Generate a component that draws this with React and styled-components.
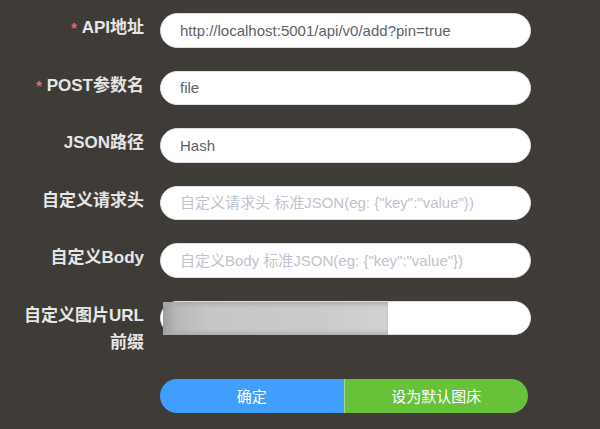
import React from "react";
import styled, { createGlobalStyle } from "styled-components";

const GlobalStyle = createGlobalStyle`
  html, body {
    margin: 0;
    padding: 0;
    background: #3f3b36;
  }
  body {
    font-family: "Liberation Sans", "Noto Sans CJK SC", sans-serif;
  }
`;

const fields = [
  { label: "API地址", required: true, value: "http://localhost:5001/api/v0/add?pin=true" },
  { label: "POST参数名", required: true, value: "file" },
  { label: "JSON路径", value: "Hash" },
  { label: "自定义请求头", placeholder: '自定义请求头 标准JSON(eg: {"key":"value"})' },
  { label: "自定义Body", placeholder: '自定义Body 标准JSON(eg: {"key":"value"})' },
];

const App = () => {
  return (
    <Page>
      <GlobalStyle />
      <Form>
        {fields.map((item, index) => (
          <Item key={index}>
            <Label>
              {item.required && <Star>*</Star>}
              {item.label}
            </Label>
            <Field>
              <Input
                defaultValue={item.value}
                placeholder={item.placeholder}
                readOnly
              />
            </Field>
          </Item>
        ))}
        <Item>
          <Label>
            自定义图片URL
            <br />
            前缀
          </Label>
          <Field>
            <Input defaultValue="" readOnly />
            <Mask />
          </Field>
        </Item>
        <ButtonRow>
          <Offset />
          <Buttons>
            <Button color="#409eff">确定</Button>
            <Button color="#67c23a" divider>
              设为默认图床
            </Button>
          </Buttons>
        </ButtonRow>
      </Form>
    </Page>
  );
};

export default App;

const Page = styled.div`
  width: 600px;
  height: 429px;
  box-sizing: border-box;
  padding-top: 13px;
  overflow: hidden;
`;

const Form = styled.div`
  display: flex;
  flex-direction: column;
`;

const Item = styled.div`
  display: flex;
  align-items: flex-start;
  margin-bottom: 23px;
`;

const Label = styled.div`
  width: 145px;
  padding-right: 1px;
  box-sizing: border-box;
  flex-shrink: 0;
  text-align: right;
  color: #e6e6e6;
  font-size: 17px;
  font-weight: bold;
  line-height: 27px;
  padding-top: 1px;
  white-space: nowrap;
`;

const Star = styled.span`
  color: #f56c6c;
  font-size: 14px;
  margin-right: 5px;
`;

const Field = styled.div`
  position: relative;
  width: 371px;
  margin-left: 15px;
`;

const Input = styled.input`
  display: block;
  width: 100%;
  height: 34.5px;
  box-sizing: border-box;
  border: 1px solid #dcdfe6;
  border-radius: 18px;
  background: #fff;
  padding: 0 19px;
  font-family: "Liberation Sans", "Noto Sans CJK SC", sans-serif;
  font-size: 15px;
  color: #606266;
  outline: none;
  &::placeholder {
    color: #c0c4cc;
  }
`;

const Mask = styled.div`
  position: absolute;
  left: 3px;
  top: 1px;
  width: 225px;
  height: 33px;
  background: linear-gradient(
    90deg,
    #9c9c9c 0%,
    #b8b8b8 6%,
    #c6c6c8 20%,
    #cbcbce 70%,
    #d2d2d5 100%
  );
  box-shadow: inset 0 4px 4px -2px #a8a8a8, inset 0 -4px 4px -2px #a8a8a8;
`;

const ButtonRow = styled.div`
  display: flex;
`;

const Offset = styled.div`
  width: 160px;
  flex-shrink: 0;
`;

const Buttons = styled.div`
  display: flex;
  width: 368px;
  height: 34px;
  border-radius: 17px;
  overflow: hidden;
`;

const Button = styled.div`
  flex: 1;
  display: flex;
  align-items: center;
  justify-content: center;
  background: ${(p) => p.color};
  color: #fff;
  font-size: 15px;
  border-left: ${(p) => (p.divider ? "1px solid #a3d98a" : "none")};
`;
